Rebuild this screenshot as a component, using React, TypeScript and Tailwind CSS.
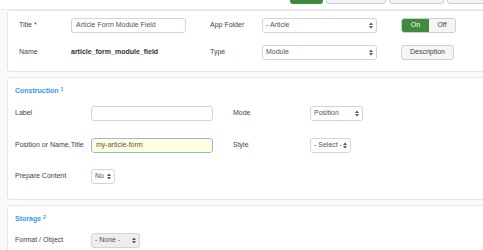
import type { ReactNode } from 'react';

function SelectBox({ value, className = '', grey = false }: { value: string; className?: string; grey?: boolean }) {
  return (
    <div
      className={`flex h-[15px] items-center justify-between rounded-[3px] border border-[#d4d4d4] px-[3px] text-[7px] text-[#555] ${
        grey ? 'bg-[#eeeeee]' : 'bg-white'
      } ${className}`}
    >
      <span>{value}</span>
      <svg width="4" height="7" viewBox="0 0 4 7" className="shrink-0" aria-hidden="true">
        <path d="M0 3 L2 0.5 L4 3 Z M0 4 L2 6.5 L4 4 Z" fill="#555" />
      </svg>
    </div>
  );
}

function Panel({ children, className = '' }: { children: ReactNode; className?: string }) {
  return (
    <div className={`mr-[-20px] rounded-[3px] border border-[#e6e6e6] bg-white ${className}`}>{children}</div>
  );
}

function Heading({ title, num }: { title: string; num: string }) {
  return (
    <p className="text-[7px] font-bold text-[#3f95ea]">
      {title} <sup className="text-[5px]">{num}</sup>
    </p>
  );
}

export default function App() {
  return (
    <div
      className="h-[250px] w-[483px] overflow-hidden bg-[#fafafa] text-[#333]"
      style={{ fontFamily: '"Liberation Sans", Arial, sans-serif' }}
    >
      {/* Toolbar (cut off at top) */}
      <div className="relative h-[10px] border-b border-[#ececec] bg-white">
        <div className="absolute left-[290px] top-[-10px] flex gap-[3px]">
          <div className="h-[14px] w-[33px] rounded-[3px] bg-[#3d8b3d]" />
          <div className="h-[14px] w-[60px] rounded-[3px] border border-[#cfcfcf] bg-[#f3f3f3]" />
          <div className="h-[14px] w-[55px] rounded-[3px] border border-[#cfcfcf] bg-[#f3f3f3]" />
          <div className="h-[14px] w-[40px] rounded-[3px] border border-[#cfcfcf] bg-[#f3f3f3]" />
        </div>
      </div>

      <div className="flex flex-col gap-[5px] pl-[7px]">
        {/* Details */}
        <Panel className="h-[62px] px-[11px] pt-[7px]">
          <div className="flex h-[15px] items-center text-[7px]">
            <span className="w-[52px] text-[#444]">Title *</span>
            <div className="flex h-[15px] w-[115px] items-center rounded-[3px] border border-[#d4d4d4] bg-white px-[4px] text-[#555]">
              Article Form Module Field
            </div>
            <span className="ml-[24px] w-[52px] text-[#444]">App Folder</span>
            <SelectBox value="- Article" className="w-[115px]" />
            <div className="ml-[24px] flex h-[15px] overflow-hidden rounded-[3px] border border-[#cfcfcf]">
              <div className="flex w-[27px] items-center justify-center bg-[#3d8b3d] text-white">On</div>
              <div className="flex w-[26px] items-center justify-center bg-[#f5f5f5] text-[#444]">Off</div>
            </div>
          </div>
          <div className="mt-[12px] flex h-[15px] items-center text-[7px]">
            <span className="w-[52px] text-[#444]">Name</span>
            <span className="w-[115px] font-bold text-[#333]">article_form_module_field</span>
            <span className="ml-[24px] w-[52px] text-[#444]">Type</span>
            <SelectBox value="Module" className="w-[115px]" />
            <div className="ml-[24px] flex h-[15px] w-[53px] items-center justify-center rounded-[3px] border border-[#cfcfcf] bg-[#f5f5f5] text-[#444]">
              Description
            </div>
          </div>
        </Panel>

        {/* Construction */}
        <Panel className="h-[123px] px-[7px] pt-[8px]">
          <Heading title="Construction" num="1" />
          <div className="mt-[9px] flex h-[15px] items-center text-[7px]">
            <span className="w-[76px] text-[#444]">Label</span>
            <div className="h-[15px] w-[122px] rounded-[3px] border border-[#d4d4d4] bg-white" />
            <span className="ml-[20px] w-[77px] text-[#444]">Mode</span>
            <SelectBox value="Position" className="w-[53px]" />
          </div>
          <div className="mt-[17px] flex h-[15px] items-center text-[7px]">
            <span className="w-[76px] text-[#444]">Position or Name,Title</span>
            <div className="flex h-[15px] w-[122px] items-center rounded-[3px] border border-[#8bbbe6] bg-[#ffffdd] px-[4px] text-[#555]">
              my-article-form
            </div>
            <span className="ml-[20px] w-[77px] text-[#444]">Style</span>
            <SelectBox value="- Select -" className="w-[41px]" />
          </div>
          <div className="mt-[16px] flex h-[15px] items-center text-[7px]">
            <span className="w-[76px] text-[#444]">Prepare Content</span>
            <SelectBox value="No" className="w-[24px]" />
          </div>
        </Panel>

        {/* Storage */}
        <Panel className="h-[60px] px-[7px] pt-[8px]">
          <Heading title="Storage" num="2" />
          <div className="mt-[8px] flex h-[15px] items-center text-[7px]">
            <span className="w-[76px] text-[#444]">Format / Object</span>
            <SelectBox value="- None -" className="w-[49px]" grey />
          </div>
        </Panel>
      </div>
    </div>
  );
}
